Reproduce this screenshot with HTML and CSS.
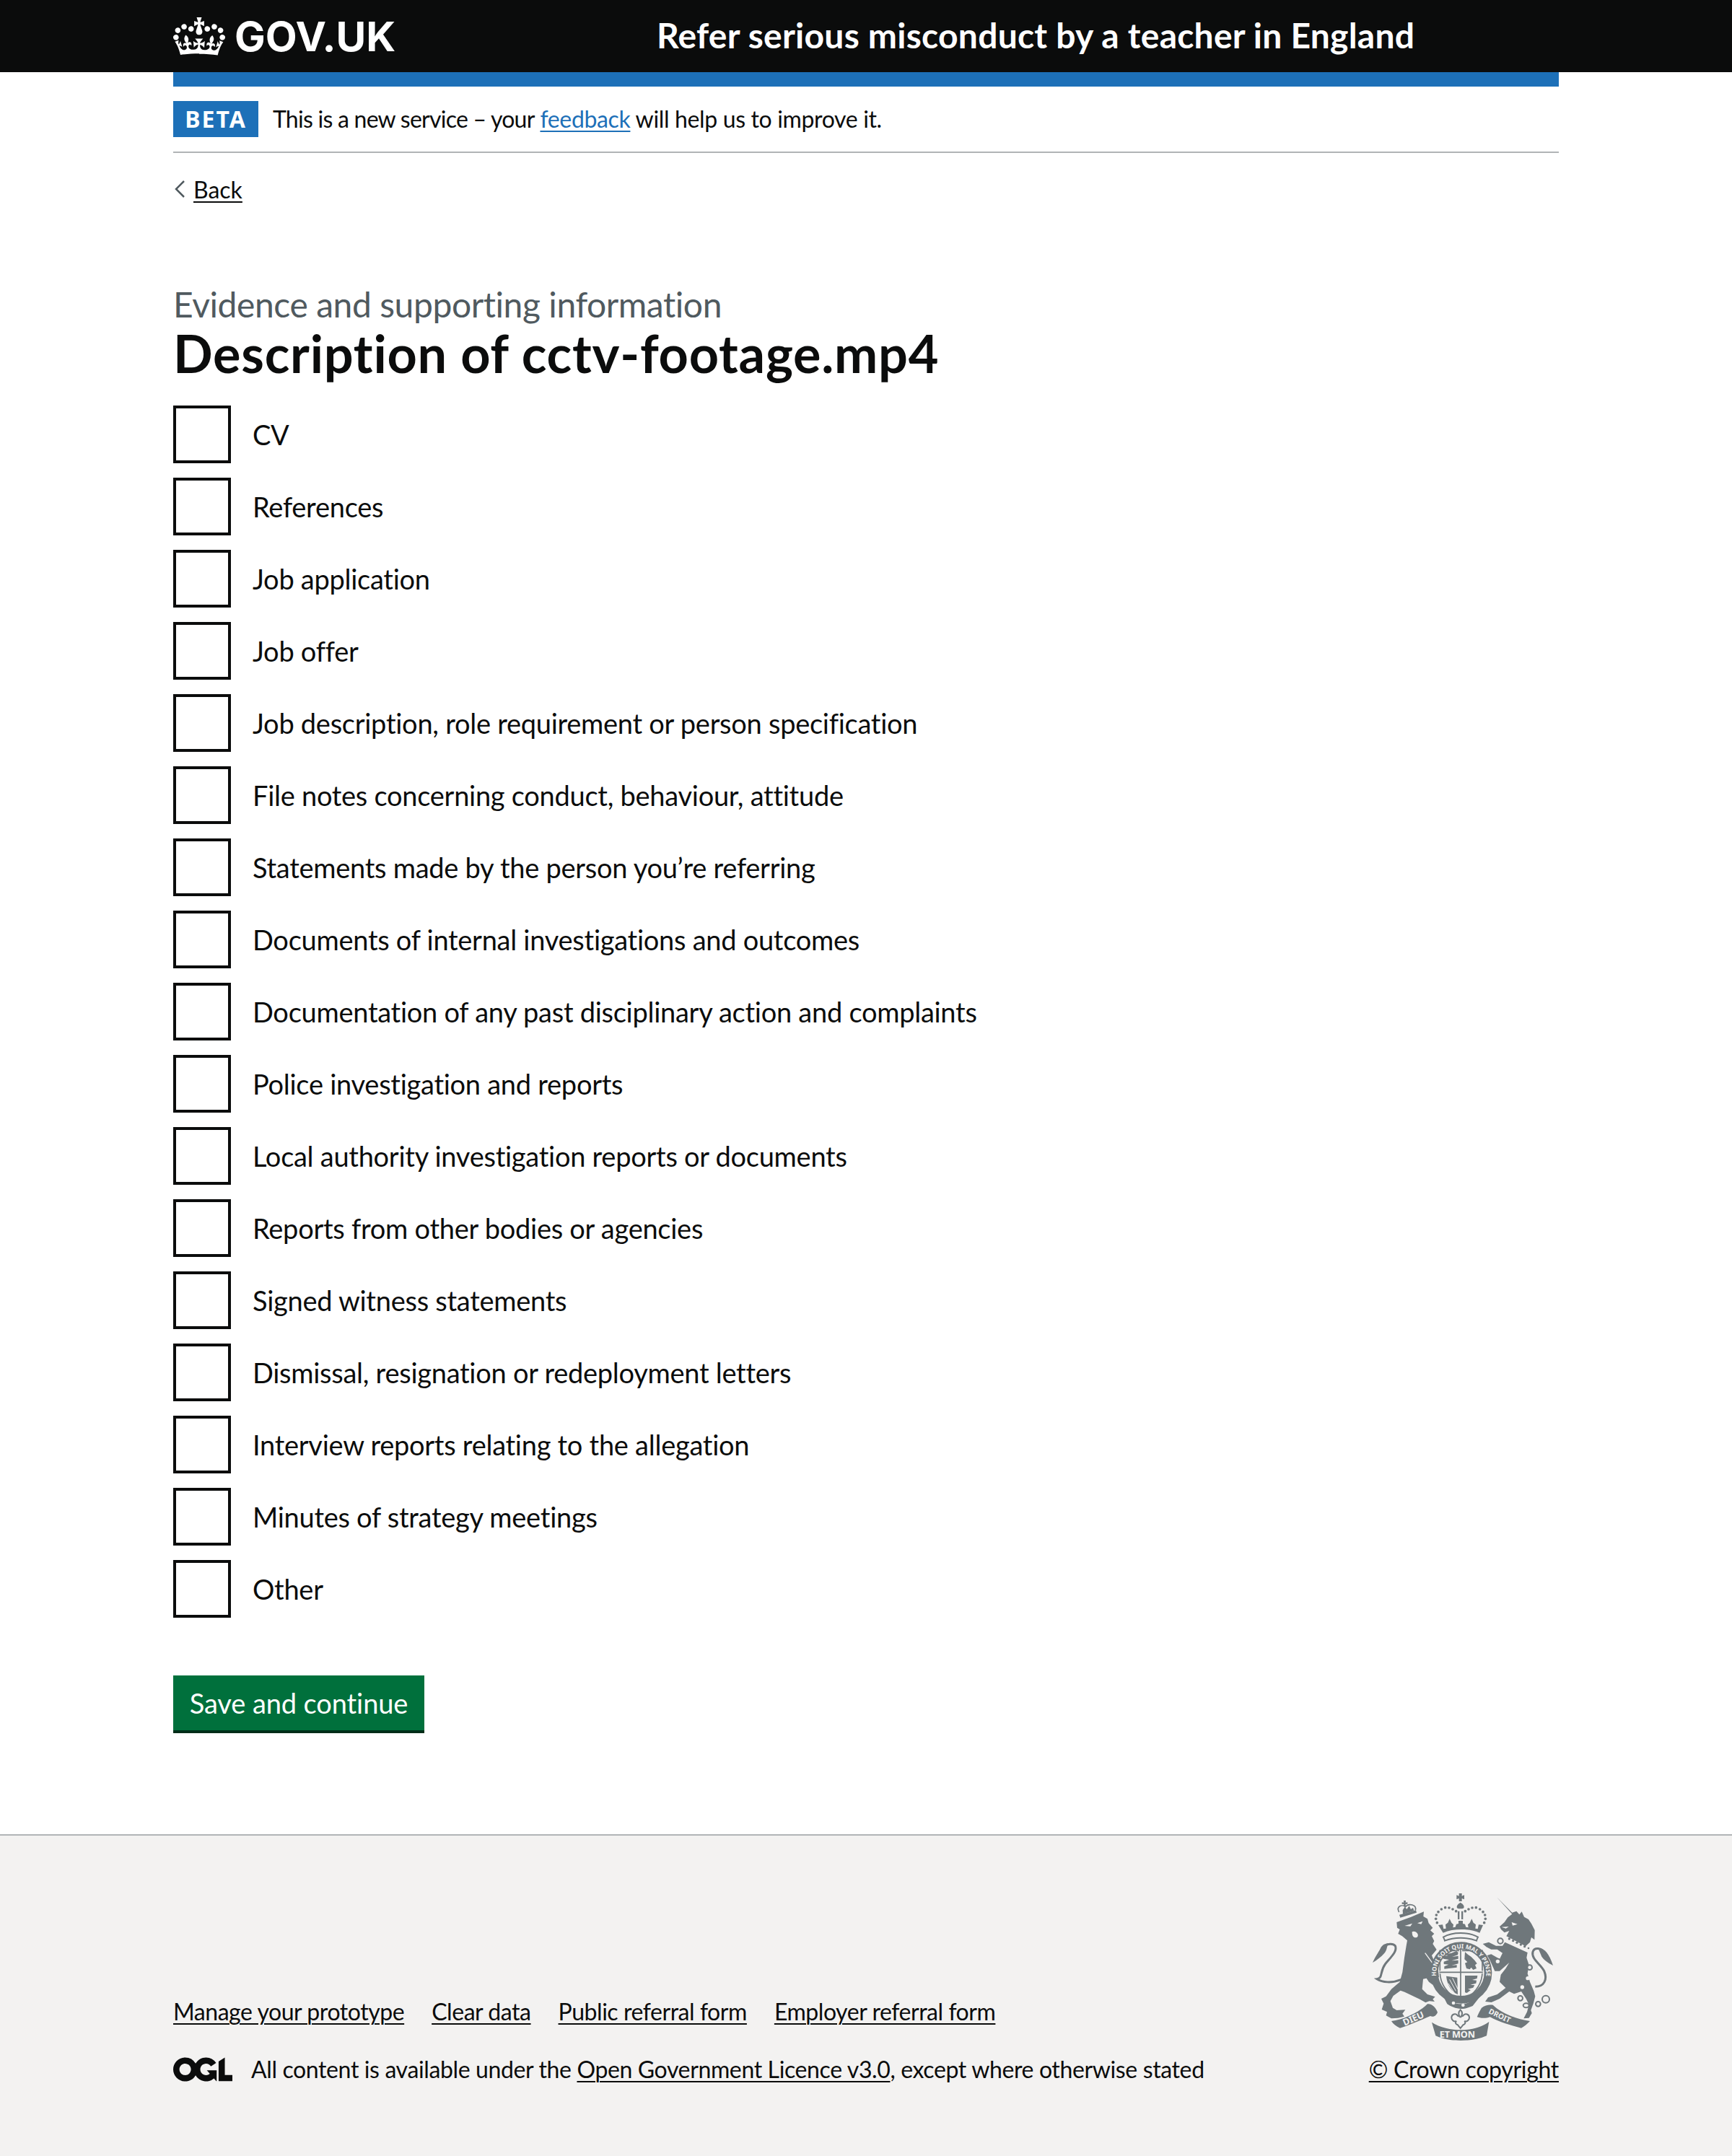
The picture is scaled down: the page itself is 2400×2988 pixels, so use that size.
FILE: index.html
```html
<!DOCTYPE html>
<html lang="en">
<head>
<meta charset="utf-8">
<title>Description of cctv-footage.mp4</title>
<link rel="stylesheet" href="styles.css">
</head>
<body>
<header class="site-header">
  <div class="wrap header-row">
    <a class="logo" href="#">
      <svg class="crown" viewBox="0 0 132 97" aria-hidden="true"><path fill="currentColor" fill-rule="evenodd" d="M25 30.2c3.5 1.5 7.7-.2 9.1-3.7 1.5-3.6-.2-7.8-3.9-9.2-3.6-1.4-7.6.3-9.1 3.9-1.4 3.5.3 7.5 3.9 9zM9 39.5c3.6 1.5 7.8-.2 9.2-3.7 1.5-3.6-.2-7.8-3.9-9.1-3.6-1.5-7.6.2-9.1 3.8-1.4 3.5.3 7.5 3.8 9zM4.4 57.2c3.5 1.5 7.7-.2 9.1-3.8 1.5-3.6-.2-7.7-3.9-9.1-3.5-1.5-7.6.3-9.1 3.8-1.4 3.5.3 7.6 3.9 9.1zm38.3-21.4c3.5 1.5 7.7-.2 9.1-3.8 1.5-3.6-.2-7.7-3.9-9.1-3.6-1.5-7.6.3-9.1 3.8-1.3 3.6.4 7.7 3.9 9.1zm64.4-5.6c-3.6 1.5-7.8-.2-9.1-3.7-1.5-3.6.2-7.8 3.8-9.2 3.6-1.4 7.7.3 9.2 3.9 1.3 3.5-.4 7.5-3.9 9zm15.9 9.3c-3.6 1.5-7.7-.2-9.1-3.7-1.5-3.6.2-7.8 3.7-9.1 3.6-1.5 7.7.2 9.2 3.8 1.5 3.5-.3 7.5-3.8 9zm4.7 17.7c-3.6 1.5-7.8-.2-9.2-3.8-1.5-3.6.2-7.7 3.9-9.1 3.6-1.5 7.7.3 9.2 3.8 1.3 3.5-.4 7.6-3.9 9.1zM89.3 35.8c-3.6 1.5-7.8-.2-9.2-3.8-1.4-3.6.2-7.7 3.9-9.1 3.6-1.5 7.7.3 9.2 3.8 1.4 3.6-.3 7.7-3.9 9.1zM69.7 17.7l8.9 4.7V9.3l-8.9 2.8c-.2-.3-.5-.6-.9-.9L72.4 0H59.6l3.5 11.2c-.3.3-.6.5-.9.9l-8.8-2.8v13.1l8.8-4.7c.3.3.6.7.9.9l-5 15.4v.1c-.2.8-.4 1.6-.4 2.4 0 4.1 3.1 7.5 7 8.1h.2c.3 0 .7.1 1 .1.4 0 .7 0 1-.1h.2c4-.6 7.1-4.1 7.1-8.1 0-.8-.1-1.7-.4-2.4V34l-5.1-15.4c.4-.2.7-.6 1-.9zM66 92.8c16.9 0 32.8 1.1 47.1 3.2 4-16.9 8.9-26.7 14-33.5l-9.6-3.4c1 4.9 1.1 7.2 0 10.2-1.5-1.4-3-4.3-4.2-8.7L108.6 76c2.8-2 5-3.2 7.5-3.3-4.4 9.4-10 11.9-13.6 11.2-4.3-.8-6.3-4.6-5.6-7.9 1-4.7 5.7-5.9 8-.5 4.3-8.7-3-11.4-7.6-8.8 7.1-7.2 7.9-13.5 2.1-21.1-8 6.1-8.1 12.3-4.5 20.8-4.7-5.4-12.1-2.5-9.5 6.2 3.4-5.2 7.9-2 7.2 3.1-.6 4.3-6.4 7.8-13.5 7.2-10.3-.9-10.9-8-11.2-13 2.5-.5 7.1 1.8 11 7.3L80.2 60c-4.1 4.4-8 5.3-12.3 5.4 1.4-4.4 8-11.6 8-11.6H55.5s6.4 7.2 7.9 11.6c-4.2-.1-8-1-12.3-5.4l1.4 16.4c3.9-5.5 8.5-7.7 10.9-7.3-.3 5-.7 12.1-11 13-7.2.6-12.9-2.9-13.5-7.2-.7-5 3.8-8.3 7.1-3.1 2.7-8.7-4.6-11.6-9.4-6.2 3.7-8.5 3.6-14.7-4.6-20.8-5.8 7.6-5 13.9 2.2 21.1-4.7-2.6-11.9.1-7.7 8.8 2.3-5.5 7.1-4.2 8.1.5.7 3.3-1.3 7.1-5.7 7.9-3.5.7-9-1.8-13.5-11.2 2.5.1 4.7 1.3 7.5 3.3l-4.7-15.4c-1.2 4.4-2.7 7.2-4.3 8.7-1.1-3-.9-5.3 0-10.2l-9.5 3.4c5 6.9 9.9 16.7 14 33.5 14.8-2.1 30.8-3.2 47.7-3.2z"/></svg>
      <span class="wordmark">GOV.UK</span>
    </a>
    <a class="service-name" href="#">Refer serious misconduct by a teacher in England</a>
  </div>
</header>
<div class="wrap">
  <div class="blue-bar"></div>
  <div class="phase">
    <strong class="tag">BETA</strong>
    <span class="phase-text"><span class="tight">This is a new service – your</span> <a class="blue-link" href="#">feedback</a> will help us to improve it.</span>
  </div>
  <a class="back" href="#"><svg class="chev" viewBox="0 0 14 24" aria-hidden="true"><path d="M13 1 L2 12 L13 23" fill="none" stroke="#505a5f" stroke-width="2.5"/></svg><span class="back-text">Back</span></a>
  <main class="main">
    <div class="caption">Evidence and supporting information</div>
    <h1 class="title">Description of cctv-footage.mp4</h1>
    <form class="checks">
      <label class="check"><input class="box" type="checkbox"><span class="lab">CV</span></label>
      <label class="check"><input class="box" type="checkbox"><span class="lab">References</span></label>
      <label class="check"><input class="box" type="checkbox"><span class="lab">Job application</span></label>
      <label class="check"><input class="box" type="checkbox"><span class="lab">Job offer</span></label>
      <label class="check"><input class="box" type="checkbox"><span class="lab">Job description, role requirement or person specification</span></label>
      <label class="check"><input class="box" type="checkbox"><span class="lab">File notes concerning conduct, behaviour, attitude</span></label>
      <label class="check"><input class="box" type="checkbox"><span class="lab">Statements made by the person you’re referring</span></label>
      <label class="check"><input class="box" type="checkbox"><span class="lab">Documents of internal investigations and outcomes</span></label>
      <label class="check"><input class="box" type="checkbox"><span class="lab">Documentation of any past disciplinary action and complaints</span></label>
      <label class="check"><input class="box" type="checkbox"><span class="lab">Police investigation and reports</span></label>
      <label class="check"><input class="box" type="checkbox"><span class="lab">Local authority investigation reports or documents</span></label>
      <label class="check"><input class="box" type="checkbox"><span class="lab">Reports from other bodies or agencies</span></label>
      <label class="check"><input class="box" type="checkbox"><span class="lab">Signed witness statements</span></label>
      <label class="check"><input class="box" type="checkbox"><span class="lab">Dismissal, resignation or redeployment letters</span></label>
      <label class="check"><input class="box" type="checkbox"><span class="lab">Interview reports relating to the allegation</span></label>
      <label class="check"><input class="box" type="checkbox"><span class="lab">Minutes of strategy meetings</span></label>
      <label class="check"><input class="box" type="checkbox"><span class="lab">Other</span></label>
      <button class="btn" type="button">Save and continue</button>
    </form>
  </main>
</div>
<footer class="footer">
  <div class="wrap footer-row">
    <div class="meta">
      <ul class="foot-links">
        <li><a class="foot-link" href="#">Manage your prototype</a></li>
        <li><a class="foot-link" href="#">Clear data</a></li>
        <li><a class="foot-link" href="#">Public referral form</a></li>
        <li><a class="foot-link" href="#">Employer referral form</a></li>
      </ul>
      <div class="licence">
        <svg class="ogl" viewBox="0 0 483.2 195.7" aria-hidden="true"><path fill="currentColor" d="M421.5 142.8V.1l-50.7 32.3v161.1h112.4v-50.7zm-122.3-9.6A47.12 47.12 0 0 1 221 97.8c0-26 21.1-47.1 47.1-47.1 16.7 0 31.4 8.7 39.7 21.8l42.7-27.2A97.63 97.63 0 0 0 268.1 0c-36.5 0-68.3 20.1-85.1 49.7A98 98 0 0 0 97.8 0C43.9 0 0 43.9 0 97.8s43.9 97.8 97.8 97.8c36.5 0 68.3-20.1 85.1-49.7a97.76 97.76 0 0 0 149.6 25.4l19.4 22.2h3v-87.8h-80l24.3 27.5zM97.8 145c-26 0-47.1-21.1-47.1-47.1s21.1-47.1 47.1-47.1 47.2 21 47.2 47S123.8 145 97.8 145"/></svg>
        <span class="licence-text">All content is available under the <a class="foot-link" href="#">Open Government Licence v3.0</a>, except where otherwise stated</span>
      </div>
    </div>
    <div class="crest-col">
      <svg class="crest" viewBox="72 72 756 612" aria-hidden="true">
        <g class="arms">
          <path d="M431 72h12v11l10-4v18l-10-4v12h-12V93l-10 4V79l10 4z"/>
          <path d="M437 110c10 6 15 12 15 18s-4 8-15 8-15-2-15-8 5-12 15-18z"/>
          <path d="M426 146h7v34h-7zM441 146h7v34h-7z"/>
          <g>
            <circle cx="340" cy="194" r="5.5"/><circle cx="335" cy="178" r="5.5"/><circle cx="337" cy="162" r="5.5"/><circle cx="345" cy="149" r="5.5"/><circle cx="358" cy="138" r="5.5"/><circle cx="374" cy="131" r="5.5"/><circle cx="390" cy="132" r="5.5"/><circle cx="405" cy="138" r="5.5"/><circle cx="419" cy="146" r="5.5"/>
            <circle cx="536" cy="194" r="5.5"/><circle cx="541" cy="178" r="5.5"/><circle cx="539" cy="162" r="5.5"/><circle cx="531" cy="149" r="5.5"/><circle cx="518" cy="138" r="5.5"/><circle cx="502" cy="131" r="5.5"/><circle cx="486" cy="132" r="5.5"/><circle cx="471" cy="138" r="5.5"/><circle cx="457" cy="146" r="5.5"/>
          </g>
          <path d="M345 204l18-2 4 18 10-2-2-16 10-8 7-16 8 16 8 8-2 12 10-2 4-12 9-2V186h18v12l9 2 4 12 10 2-2-12 8-8 8-16 7 16 10 8-2 16 10 2 4-18 18 2-14 32c-24-10-48-14-76-14s-52 4-76 14z"/>
          <path class="soft" d="M366 254c20-12 46-17 72-17s52 5 72 17c-3 6-5 10-6 15-20-8-42-12-66-12s-46 4-66 12c-1-5-3-9-6-15z"/>

          <path d="M172 192L205 180 232 170 285 148 283 168 300 178 305 196 322 215 312 226 328 240 318 250 328 270 322 282 338 306 318 330 345 395 348 420 330 432 322 452 306 440 296 425 282 428 278 470 300 492 332 502 322 512 330 522 308 520 292 526 268 512 238 498 205 482 188 476 158 498 146 520 156 548 172 558 208 556 196 572 204 584 178 590 150 592 128 580 132 565 110 555 118 530 108 510 128 500 150 470 185 440 196 400 204 340 212 290 216 268 195 250 178 240 185 222 174 215Z"/>
          <path class="arm-line" d="M192 430C150 447 112 442 90 428 116 424 100 400 125 365 150 335 176 312 166 290 156 278 132 282 120 292"/>
          <path d="M72 360C85 332 95 320 105 300 112 286 125 280 138 280 130 295 132 310 120 322 108 336 90 350 72 360Z"/>
          <path class="cut" d="M205 207l32-10-8 12zM258 196l22-8-6 12zM236 232c8-4 20 0 24 10 2 8-2 14-10 14s-14-6-14-24z"/>
          <path class="cut-line" d="M290 320L345 395"/>
          <path d="M183 161L252 142 255 152 187 173Z"/>
          <path class="thin" d="M182 150C168 126 196 116 208 128 222 112 256 118 250 142"/>
          <path d="M201 102h9l-1 8 8-1v8l-8-1 1 8h-9l1-8-8 1v-8l8 1zM197 142l9-14 8 10 10-14 7 14 9-6 4 12-46 14z"/>

          <path d="M588 88L652 152 670 146 682 160 692 148 702 170 720 180 732 198 746 225 745 265 732 255 726 275 708 292 628 250 640 228 620 235 606 222 600 210 620 192 634 172 652 158Z"/>
          <path class="cut" d="M650 192l24 8-20 6zM608 212l30-2-12 8z"/>
          <g><circle cx="640" cy="261" r="5"/><circle cx="656" cy="269" r="5"/><circle cx="672" cy="277" r="5"/><circle cx="688" cy="285" r="5"/><circle cx="704" cy="293" r="5"/><circle cx="720" cy="300" r="4"/></g>
          <path d="M622 275L716 318 712 340 722 370 716 405 726 440 742 478 748 500 740 530 730 558 734 570 722 590 700 592 714 565 722 535 710 510 690 480 660 490 640 480 600 510 566 525 540 522 552 505 590 492 625 465 600 440 605 410 625 385 640 360 600 395 580 395 560 350 548 330 565 325 600 345 612 320 590 305 565 305 545 295 530 282 555 275 585 290 612 290Z"/>
          <circle class="ring-cut" cx="603" cy="270" r="11"/>
          <circle class="ring-cut" cx="592" cy="355" r="11"/>
          <circle class="ring-cut" cx="725" cy="380" r="10"/>
          <circle class="cut" cx="717" cy="425" r="8"/><circle class="cut" cx="694" cy="462" r="8"/>
          <path class="arm-line" d="M748 460C785 460 800 430 785 395 770 365 730 345 738 315 745 295 775 298 785 320"/>
          <path d="M760 300C785 298 805 320 822 372 800 360 785 350 775 335Z"/>
          <circle class="ring" cx="686" cy="508" r="10"/><ellipse class="ring" cx="710" cy="538" rx="12" ry="9"/><circle class="ring" cx="760" cy="532" r="10"/><circle class="ring" cx="792" cy="512" r="15"/>

          <path class="panel" d="M352 310H528V398C528 455 490 495 440 522 390 495 352 455 352 398Z"/>
          <path class="cut-wide" d="M438 300V510M350 400H530"/>
          <path d="M438 300V510M350 400H530" class="thin"/>
          <path d="M368 326l32-6 20-8 8 6-2 10-24 8 26-4v12l-28 8 28-2v14l-28 8 22-2v10l-52 6v-10l18-8-20-2v-10l22-8-24-4v-10l20-4zM456 316l12 10 14 10 14 14 10 14-8 6 6 14-14 6-8-10-6 8-14-4-6-22 10-4-12-12zM378 416l46 6 2 70c-22-8-44-36-48-76zM456 414h52l-2 12-20 6 18 2-2 12-24 6 18 2-6 10-22 6 12 4-16 12-8-2z"/>
          <path class="cut-line2" d="M392 430l26 48M404 424l22 46M386 446l28 44"/>
          <circle class="garter" cx="440" cy="402" r="112"/>
          <path id="garter-path" class="none" d="M368 480A104 104 0 1 1 512 480"/>
          <path d="M366 500c30 22 50 32 74 32s52-12 78-30l-30 38c-20 8-32 12-48 12-22 0-44-10-58-20z"/>
          <circle class="cut" cx="408" cy="528" r="7"/><circle class="cut" cx="448" cy="537" r="7"/>

          <path d="M150 603C200 596 262 570 300 532 316 530 332 542 342 566 340 576 326 590 312 582 270 600 220 622 186 632 170 626 158 615 150 603Z"/>
          <path d="M525 548C540 536 556 534 572 536 600 564 660 594 726 603 716 614 702 626 690 632 650 622 596 606 560 586 540 594 516 590 506 586 512 572 518 560 525 548Z"/>
          <path d="M318 608C350 630 400 640 440 640S525 630 556 606L546 664C510 680 470 684 438 684S366 680 334 664Z"/>
          <path class="fleur" d="M437 556c-10 10-8 20-3 28l-8-3c-8-14-26-6-26 8 0 12 12 18 20 14-6 8-2 14 6 16l11 14 11-14c8-2 12-8 6-16 8 4 20-2 20-14 0-14-18-22-26-8l-8 3c5-8 7-18-3-28z"/>
        </g>
        <text class="motto"><textPath href="#garter-path" startOffset="50%" text-anchor="middle">HONI SOIT QUI MAL Y PENSE</textPath></text>
        <text class="ribbon" x="205" y="623" transform="rotate(-24 205 623)">DIEU</text>
        <text class="ribbon" x="350" y="672">ET MON</text>
        <text class="ribbon small" x="552" y="570" transform="rotate(25 552 570)">DROIT</text>
      </svg>
      <a class="foot-link crown-copy" href="#">© Crown copyright</a>
    </div>
  </div>
</footer>
</body>
</html>
```
FILE: styles.css
```css
* { box-sizing: border-box; }
html, body { margin: 0; padding: 0; }
body { font-family: "Lato", "Noto Sans", sans-serif; font-variant-ligatures: none; color: #0b0c0c; background: #fff; }
.wrap { width: 1920px; margin: 0 auto; }
a { text-decoration-thickness: 2px; text-underline-offset: 0.14em; }

.site-header { background: #0b0c0c; height: 100px; }
.header-row { display: flex; align-items: center; height: 100px; }
.logo { display: flex; align-items: center; width: 670px; color: #fff; text-decoration: none; }
.crown { width: 72px; height: 53px; margin-right: 14px; color: #fff; }
.wordmark { font-family: "Inter", sans-serif; font-weight: 700; font-size: 57px; line-height: 1; margin-left: -1px; }
.service-name { font-weight: 700; font-size: 48px; letter-spacing: 0.24px; color: #fff; text-decoration: none; white-space: nowrap; margin-top: -3px; }

.blue-bar { height: 20px; background: #1d70b8; }
.phase { display: flex; align-items: center; padding-top: 20px; padding-bottom: 20px; border-bottom: 2px solid #b1b4b6; box-sizing: content-box; height: 50px; }
.tag { display: block; width: 118px; height: 50px; line-height: 50px; text-align: center; background: #1d70b8; color: #fff; font-family: "Noto Sans", sans-serif; font-size: 32px; font-weight: 700; letter-spacing: 2px; margin-right: 20px; }
.phase-text { font-size: 32px; line-height: 50px; letter-spacing: -0.35px; }
.tight { letter-spacing: -0.75px; }
.blue-link { color: #1d70b8; }

.back { display: flex; align-items: center; margin-top: 30px; height: 40px; color: #0b0c0c; text-decoration: none; font-size: 32px; }
.chev { width: 14px; height: 24px; margin-left: 2px; margin-right: 12px; }
.back-text { text-decoration: underline; text-decoration-thickness: 2px; text-underline-offset: 0.14em; }

.main { padding-top: 110px; }
.caption { font-size: 48px; line-height: 60px; color: #505a5f; letter-spacing: -0.43px; }
.title { margin: 0 0 36px; font-size: 72px; line-height: 74px; font-weight: 700; letter-spacing: 0.75px; }

.checks { display: block; }
.check { display: flex; align-items: center; height: 80px; margin-bottom: 20px; }
.box { appearance: none; -webkit-appearance: none; width: 80px; height: 80px; margin: 0 30px 0 0; border: 4px solid #0b0c0c; background: #fff; border-radius: 0; flex: none; }
.lab { font-size: 38px; line-height: 50px; letter-spacing: -0.27px; }

.btn { display: block; margin: 80px 0 0; width: 348px; height: 80px; padding: 0; border: 0; border-bottom: 4px solid #002d18; background: #00703c; color: #fff; font-family: inherit; font-size: 38px; line-height: 50px; letter-spacing: -0.1px; font-variant-ligatures: none; }

.footer { margin-top: 140px; background: #f3f2f1; border-top: 2px solid #b1b4b6; min-height: 446px; padding-top: 80px; }
.footer-row { display: flex; justify-content: space-between; align-items: flex-end; }
.meta { display: flex; flex-direction: column; }
.foot-links { display: flex; gap: 38px; list-style: none; margin: 0 0 40px; padding: 0; font-size: 32px; line-height: 40px; letter-spacing: -0.45px; }
.foot-link { color: #0b0c0c; }
.licence { display: flex; align-items: center; font-size: 32px; line-height: 40px; letter-spacing: -0.37px; }
.ogl { width: 82px; height: 34px; margin-right: 26px; color: #0b0c0c; }
.crest-col { display: flex; flex-direction: column; align-items: center; font-size: 32px; line-height: 40px; letter-spacing: -0.3px; }
.crest { width: 252px; height: 204px; margin-bottom: 20px; display: block; }
.arms { fill: #6f777b; }
.none { fill: none; }
.cut { fill: #f3f2f1; }
.cut-line { fill: none; stroke: #f3f2f1; stroke-width: 4; }
.cut-line2 { fill: none; stroke: #f3f2f1; stroke-width: 3; }
.cut-wide { fill: none; stroke: #f3f2f1; stroke-width: 12; }
.thin { fill: none; stroke: #6f777b; stroke-width: 5; }
.panel { fill: #f3f2f1; stroke: #6f777b; stroke-width: 5; }
.garter { fill: none; stroke: #6f777b; stroke-width: 32; }
.fleur { fill: #f3f2f1; stroke: #6f777b; stroke-width: 6; }
.soft { fill: #f3f2f1; stroke: #6f777b; stroke-width: 6; }
.arm-line { fill: none; stroke: #6f777b; stroke-width: 9; }
.ring { fill: none; stroke: #6f777b; stroke-width: 6; }
.ring-cut { fill: #f3f2f1; stroke: #6f777b; stroke-width: 6; }
.motto { font-family: "Noto Sans", sans-serif; font-size: 25px; font-weight: 700; fill: #f3f2f1; }
.ribbon { font-family: "Noto Sans", sans-serif; font-size: 38px; font-weight: 700; fill: #f3f2f1; }
.small { font-size: 31px; }
```
